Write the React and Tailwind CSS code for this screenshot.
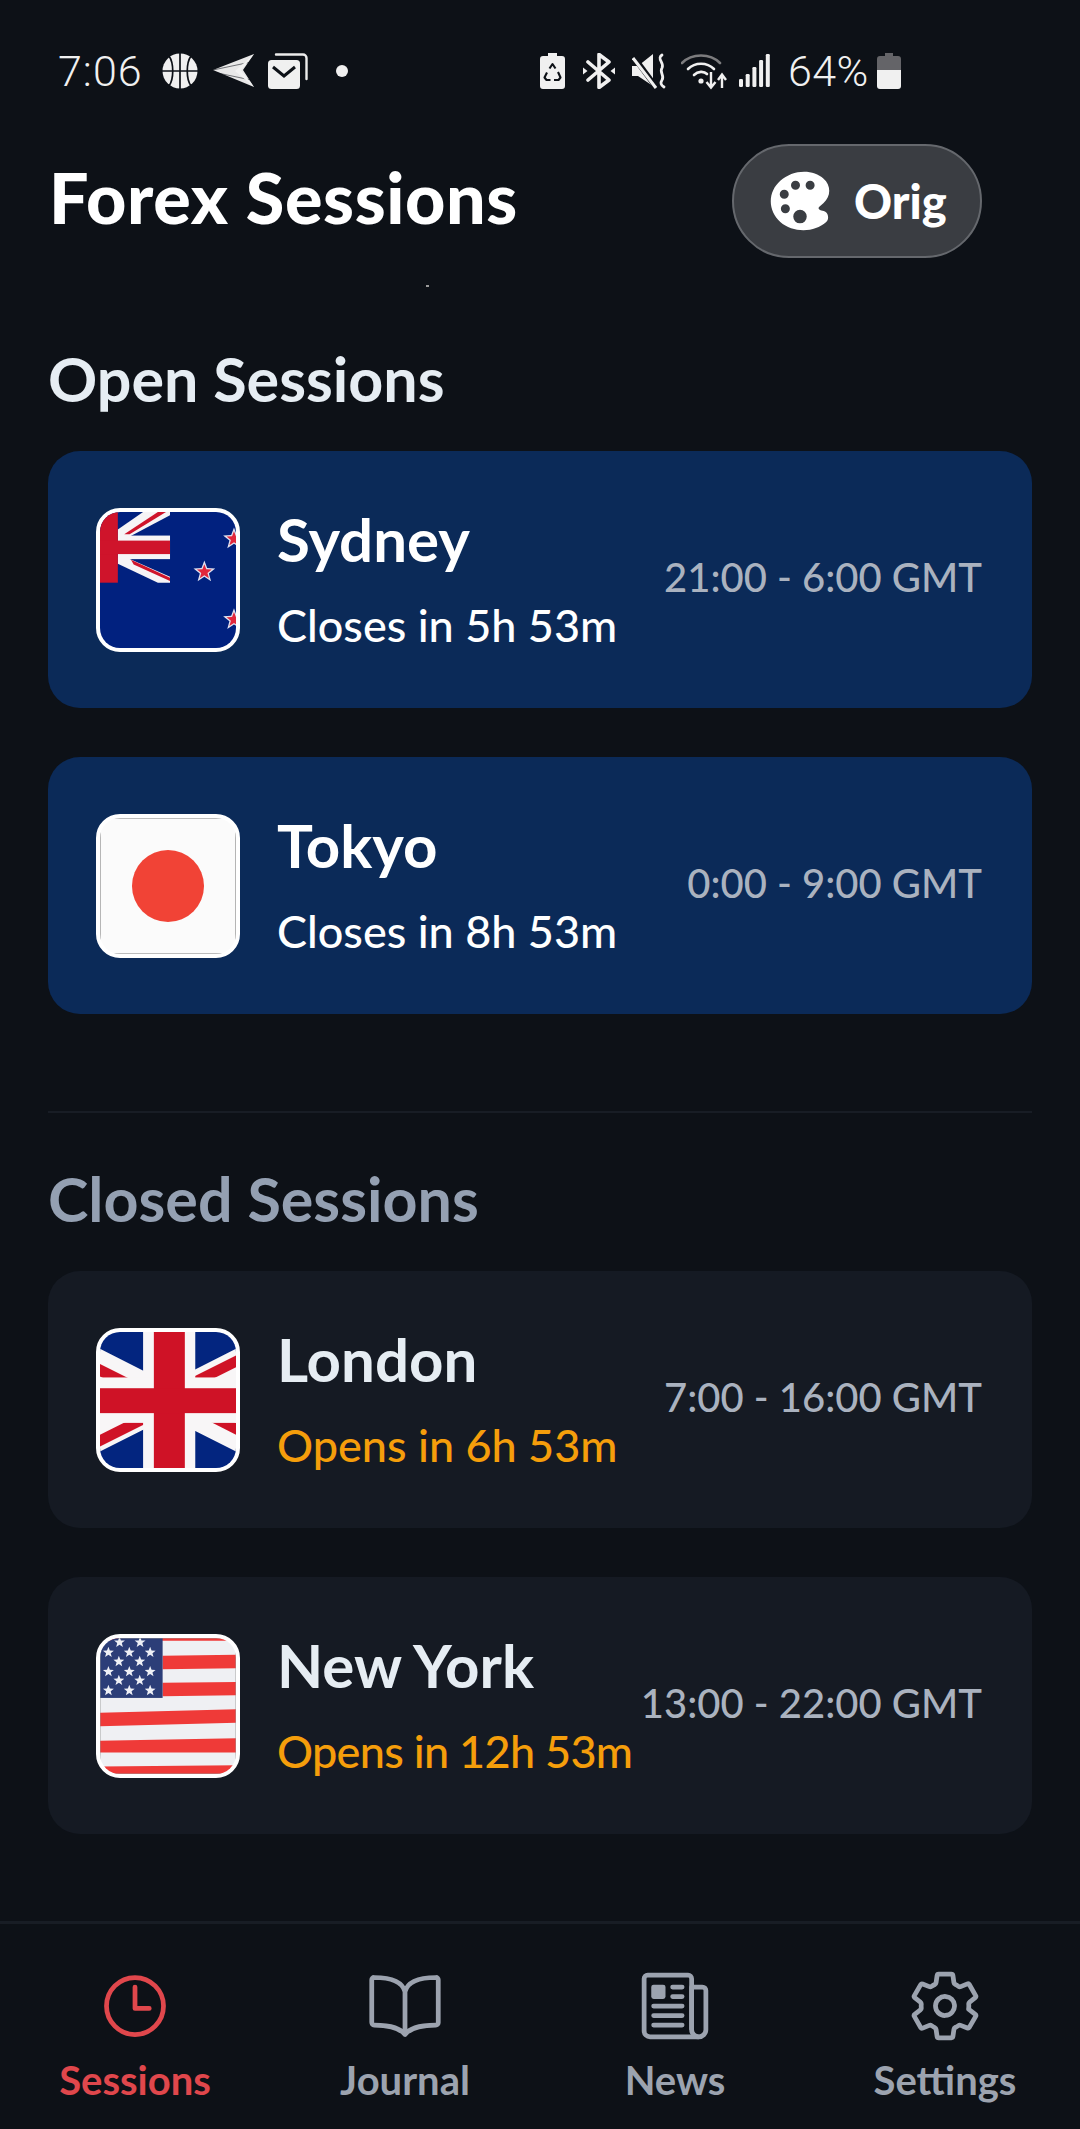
import React from "react";
import { IoTimeOutline, IoBookOutline, IoNewspaperOutline, IoSettingsOutline, IoColorPalette } from "react-icons/io5";

const star = (cx, cy, r, inner = 0.42) => {
  const pts = [];
  for (let i = 0; i < 10; i++) {
    const rad = i % 2 === 0 ? r : r * inner;
    const a = -Math.PI / 2 + (i * Math.PI) / 5;
    pts.push(`${(cx + rad * Math.cos(a)).toFixed(1)},${(cy + rad * Math.sin(a)).toFixed(1)}`);
  }
  return pts.join(" ");
};

function NZFlag() {
  const s = (x, y) => (
    <g key={x + "-" + y}>
      <polygon points={star(x, y, 34)} fill="#dfe0ee" />
      <polygon points={star(x, y, 23)} fill="#e2273c" />
    </g>
  );
  return (
    <svg viewBox="0 0 404 404" className="h-full w-full block">
      <rect width="404" height="404" fill="#01217f" />
      <polygon points="53,52 128,0 208,0 208,10 90,72 53,72" fill="#f6f4f6" />
      <polygon points="72,66 172,0 196,0 88,66" fill="#cf142b" />
      <polygon points="53,138 85,138 208,192 208,210 172,210 53,154" fill="#f6f4f6" />
      <polygon points="92,142 208,195 208,205 100,156 " fill="#cf142b" />
      <rect x="53" y="70" width="155" height="70" fill="#f6f4f6" />
      <rect x="0" y="0" width="53" height="210" fill="#cf142b" />
      <rect x="0" y="85" width="208" height="40" fill="#cf142b" />
      {s(310, 178)}
      {s(398, 80)}
      {s(398, 320)}
    </svg>
  );
}

function JapanFlag() {
  return (
    <svg viewBox="0 0 404 404" className="h-full w-full block">
      <rect width="404" height="404" fill="#fbfbfb" />
      <circle cx="202" cy="202" r="107" fill="#f14336" />
      <rect x="1" y="1" width="402" height="402" rx="22" fill="none" stroke="#a8a8a8" strokeWidth="3" />
    </svg>
  );
}

function UKFlag() {
  return (
    <svg viewBox="0 0 404 404" className="h-full w-full block">
      <rect width="404" height="404" fill="#03257f" />
      <polygon points="0,50 202,152 404,50 404,152 303,202 404,253 404,355 202,253 0,355 0,253 101,202 0,152" fill="#f8f6f7" />
      <polygon points="0,95 202,196 202,233 0,132" fill="#cf1226" />
      <polygon points="404,70 404,105 202,206 202,171" fill="#cf1226" />
      <polygon points="0,305 0,340 202,239 202,204" fill="#cf1226" />
      <polygon points="404,270 404,305 202,203 202,168" fill="#cf1226" />
      <rect x="128" y="0" width="155" height="404" fill="#f8f6f7" />
      <rect x="0" y="135" width="404" height="135" fill="#f8f6f7" />
      <rect x="160" y="0" width="92" height="404" fill="#cf1226" />
      <rect x="0" y="167" width="404" height="74" fill="#cf1226" />
    </svg>
  );
}

function USFlag() {
  const stripes = [
    "0,0 404,0 404,8 0,8",
    "186,53 404,50 404,90 186,93",
    "186,133 404,131 404,170 186,173",
    "0,222 404,212 404,252 0,262",
    "0,305 404,298 404,340 0,340",
    "0,382 404,378 404,404 0,404",
  ];
  const stars = [
    [58, 13], [119, 13],
    [25, 43], [87, 43], [149, 43],
    [56, 70], [118, 70],
    [25, 100], [87, 100], [149, 100],
    [56, 126], [118, 126],
    [25, 156], [87, 156], [149, 156],
  ];
  return (
    <svg viewBox="0 0 404 404" className="h-full w-full block">
      <rect width="404" height="404" fill="#eff0f3" />
      {stripes.map((p) => (
        <polygon key={p} points={p} fill="#ef3a38" />
      ))}
      <rect width="186" height="178" fill="#2c3e78" />
      {stars.map(([x, y]) => (
        <polygon key={x + "-" + y} points={star(x, y, 17)} fill="#eef0f6" />
      ))}
      <rect x="0.5" y="0.5" width="403" height="403" rx="22" fill="none" stroke="#9a9a9a" strokeWidth="2" />
    </svg>
  );
}

function Basketball() {
  return (
    <svg viewBox="0 0 36 36" className="h-[36px] w-[36px]">
      <circle cx="18" cy="18" r="17.5" fill="#f0f0f0" />
      <path d="M0 18H36M18 0V36M7 3C12 10 12 26 7 33M29 3C24 10 24 26 29 33" fill="none" stroke="#0d1117" strokeWidth="1.7" />
    </svg>
  );
}

function Plane() {
  return (
    <svg viewBox="0 0 42 34" className="h-[34px] w-[42px]">
      <path d="M0 16L41 0L30 16L41 33Z" fill="#e8e8e8" />
      <path d="M0 16L38 8M0 18L38 26" stroke="#0d1117" strokeWidth="1" opacity="0.55" fill="none" />
      <path d="M41 0L28 16.5L41 33L22 17Z" fill="#f2f2f2" />
    </svg>
  );
}

function MailStack() {
  return (
    <svg viewBox="0 0 40 36" className="h-[36px] w-[40px]">
      <path d="M8 1.5H35A3.5 3.5 0 0 1 38.5 5V26" fill="none" stroke="#ececec" strokeWidth="2.4" strokeLinecap="round" />
      <rect x="0" y="7" width="32" height="29" rx="3.5" fill="#f0f0f0" />
      <path d="M5 14L16 23L27 14" fill="none" stroke="#0d1117" strokeWidth="3" />
    </svg>
  );
}

function RecycleBattery() {
  return (
    <svg viewBox="0 0 25 36" className="h-[36px] w-[25px]">
      <path d="M8 0H17V3H22A3 3 0 0 1 25 6V33A3 3 0 0 1 22 36H3A3 3 0 0 1 0 33V6A3 3 0 0 1 3 3H8Z" fill="#f0f0f0" />
      <path d="M9.5 15.5L12.5 11L15.5 15.5M18 19L20.5 24.5L18.5 27H14M10.5 27H6.5L4.5 24.5L7 19.5" fill="none" stroke="#0d1117" strokeWidth="2.1" strokeLinejoin="round" />
    </svg>
  );
}

function Bluetooth() {
  return (
    <svg viewBox="0 0 32 36" className="h-[36px] w-[32px]">
      <path d="M5 9L26 27L16 34.5V1.5L26 9L5 27" fill="none" stroke="#f0f0f0" strokeWidth="3.6" strokeLinejoin="round" strokeLinecap="round" />
      <path d="M0 14.5L4.5 18L0 21.5Z M32 14.5L27.5 18L32 21.5Z" fill="#f0f0f0" />
    </svg>
  );
}

function Mute() {
  return (
    <svg viewBox="0 0 34 36" className="h-[36px] w-[34px]">
      <path d="M0 13H6L21 1V33L6 23H0Z" fill="#f0f0f0" />
      <path d="M1 3L24 34" stroke="#0d1117" strokeWidth="5.5" />
      <path d="M1 5L24 35" stroke="#f0f0f0" strokeWidth="3" />
      <path d="M30 2C24 6 33 10 30 15C27 19 33 23 30 27C28 30 29 32 32 34" fill="none" stroke="#f0f0f0" strokeWidth="2.8" strokeLinecap="round" />
    </svg>
  );
}

function Wifi() {
  return (
    <svg viewBox="0 0 47 38" className="h-[38px] w-[47px]">
      <path d="M1 11C11 1 29 1 39 11" fill="none" stroke="#7c7c7e" strokeWidth="2.6" strokeLinecap="round" />
      <path d="M7 17C14 10 26 10 33 17" fill="none" stroke="#f0f0f0" strokeWidth="2.6" strokeLinecap="round" />
      <path d="M13 23C17 19 23 19 26 22" fill="none" stroke="#f0f0f0" strokeWidth="2.6" strokeLinecap="round" />
      <circle cx="20" cy="29" r="2.6" fill="#f0f0f0" />
      <path d="M30 20V35M25.5 30L30 35.5L34.5 30" fill="none" stroke="#f0f0f0" strokeWidth="2.4" />
      <path d="M41 36V23M37 28L41 22.5L45 28" fill="none" stroke="#f0f0f0" strokeWidth="2.4" />
    </svg>
  );
}

function Signal() {
  return (
    <svg viewBox="0 0 32 36" className="h-[36px] w-[32px]" fill="#f0f0f0">
      <rect x="0" y="26" width="4" height="8" rx="1.2" />
      <rect x="6.7" y="21" width="4" height="13" rx="1.2" />
      <rect x="13.4" y="14" width="4" height="20" rx="1.2" />
      <rect x="20.1" y="7" width="4" height="27" rx="1.2" />
      <rect x="26.8" y="1" width="4" height="33" rx="1.2" />
    </svg>
  );
}

function Battery() {
  return (
    <svg viewBox="0 0 24 36" className="h-[36px] w-[24px]">
      <path d="M8 0H16V3H21A3 3 0 0 1 24 6V17H0V6A3 3 0 0 1 3 3H8Z" fill="#646468" />
      <path d="M0 17H24V33A3 3 0 0 1 21 36H3A3 3 0 0 1 0 33Z" fill="#f0f0f0" />
    </svg>
  );
}

function StatusBar() {
  return (
    <div className="mt-[52px] ml-[58px] flex h-[38px] items-center font-['Roboto',sans-serif] text-[#f0f0f0]">
      <span className="w-[104px] text-[43px] leading-none font-light tracking-[1px]">7:06</span>
      <Basketball />
      <span className="ml-[15px]"><Plane /></span>
      <span className="ml-[13px]"><MailStack /></span>
      <span className="ml-[28px] h-[12px] w-[12px] rounded-full bg-[#f0f0f0]" />
      <span className="ml-[192px]"><RecycleBattery /></span>
      <span className="ml-[18px]"><Bluetooth /></span>
      <span className="ml-[17px]"><Mute /></span>
      <span className="ml-[15px]"><Wifi /></span>
      <span className="ml-[11px]"><Signal /></span>
      <span className="ml-[17px] w-[80px] text-[43px] leading-none font-light tracking-[0.4px] whitespace-nowrap">64%</span>
      <span className="ml-[9px]"><Battery /></span>
    </div>
  );
}

function Header() {
  return (
    <div className="mt-[54px] flex h-[114px] items-center justify-between pr-[98px] pl-[49px]">
      <h1 className="pb-[8px] text-[70px] leading-none font-black tracking-[0.6px] text-white">Forex Sessions</h1>
      <div className="flex h-[114px] w-[250px] items-center gap-[18px] rounded-full border-2 border-[#65686d] bg-[#3a3d42] pl-[30px]">
        <IoColorPalette className="h-[72px] w-[72px] text-white" />
        <span className="text-[47px] leading-none font-black text-white">Orig</span>
      </div>
    </div>
  );
}

function Card({ flag, name, sub, time, open, tight }) {
  return (
    <div className={open
      ? "flex h-[257px] items-center rounded-[32px] bg-[#0b2a58] pr-[50px] pl-[48px]"
      : "flex h-[257px] items-center rounded-[32px] bg-[#151a23] pr-[50px] pl-[48px]"}>
      <div className="h-[144px] w-[144px] shrink-0 overflow-hidden rounded-[24px] border-4 border-white bg-white">
        {flag}
      </div>
      <div className="ml-[37px] flex flex-col gap-[31px]">
        <span className={open
          ? "text-[60px] leading-[60px] font-bold text-white"
          : "text-[60px] leading-[60px] font-bold text-[#e6edf3]"}>{name}</span>
        <span className={(open
          ? "text-[45px] leading-[50px] font-medium whitespace-nowrap text-white"
          : "text-[45px] leading-[50px] font-medium whitespace-nowrap text-[#f59e0b]") + (tight ? " tracking-[-0.7px]" : "")}>{sub}</span>
      </div>
      <span className="ml-auto pb-[5px] text-[40px] leading-none font-medium whitespace-nowrap text-[#aab2bf]">{time}</span>
    </div>
  );
}

function NavItem({ icon, label, active }) {
  return (
    <div className={active
      ? "flex flex-col items-center text-[#e0474c]"
      : "flex flex-col items-center text-[#9ca3af]"}>
      {icon}
      <span className="mt-[14px] text-[40px] leading-[44px] font-bold">{label}</span>
    </div>
  );
}

export default function App() {
  return (
    <div className="relative flex h-[2129px] w-[1080px] flex-col overflow-hidden bg-[#0d1117] font-['Lato',sans-serif]">
      <StatusBar />
      <Header />
      <div className="absolute top-[285px] left-[426px] h-[2px] w-[3px] bg-[#9a9a9a]" />
      <main className="flex flex-1 flex-col px-[48px]">
        <h2 className="mt-[90px] text-[61px] leading-[62px] font-bold text-[#e6edf3]">Open Sessions</h2>
        <div className="mt-[41px] flex flex-col gap-[49px]">
          <Card open flag={<NZFlag />} name="Sydney" sub="Closes in 5h 53m" time="21:00 - 6:00 GMT" />
          <Card open flag={<JapanFlag />} name="Tokyo" sub="Closes in 8h 53m" time="0:00 - 9:00 GMT" />
        </div>
        <div className="mt-[97px] h-[2px] bg-[#181d25]" />
        <h2 className="mt-[55px] text-[61px] leading-[62px] font-bold text-[#94a0b2]">Closed Sessions</h2>
        <div className="mt-[41px] flex flex-col gap-[49px]">
          <Card flag={<UKFlag />} name="London" sub="Opens in 6h 53m" time="7:00 - 16:00 GMT" />
          <Card tight flag={<USFlag />} name="New York" sub="Opens in 12h 53m" time="13:00 - 22:00 GMT" />
        </div>
      </main>
      <nav className="grid h-[208px] grid-cols-4 border-t-[3px] border-[#181d25] pt-[44px]">
        <NavItem active label="Sessions" icon={<IoTimeOutline className="h-[76px] w-[76px]" />} />
        <NavItem label="Journal" icon={<IoBookOutline className="h-[76px] w-[76px]" />} />
        <NavItem label="News" icon={<IoNewspaperOutline className="h-[76px] w-[76px]" />} />
        <NavItem label="Settings" icon={<IoSettingsOutline className="h-[76px] w-[76px]" />} />
      </nav>
    </div>
  );
}
